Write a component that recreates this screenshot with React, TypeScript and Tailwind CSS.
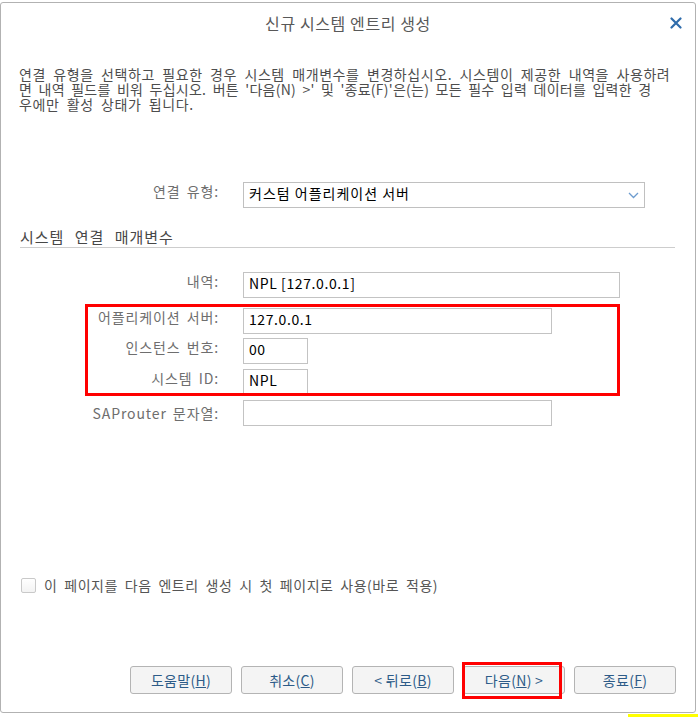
function Field({
  label,
  value,
  width,
  rowClass,
  labelClass = "",
}: {
  label: string;
  value?: string;
  width: string;
  rowClass: string;
  labelClass?: string;
}) {
  return (
    <div className={`flex items-start ${rowClass}`}>
      <div className={`w-[218px] shrink-0 whitespace-nowrap text-right text-[14px] leading-[18px] tracking-[0.9px] text-[#6e6e6e] [word-spacing:2px] ${labelClass}`}>
        {label}
      </div>
      <div className={`ml-[24px] h-[26px] border border-[#c3c3c3] bg-white pl-[5px] pt-[1px] text-[14px] leading-[18px] tracking-[0.6px] text-black ${width}`}>
        {value}
      </div>
    </div>
  );
}

function Btn({ pre, key1, post }: { pre: string; key1: string; post?: string }) {
  return (
    <button className="flex h-[28px] w-[102px] items-center justify-center rounded-[3px] border border-[#b4b4b4] bg-[#f4f4f4] text-[14px] tracking-[0.3px] text-[#2d5b88]">
      {pre}(<span className="underline">{key1}</span>){post}
    </button>
  );
}

export default function App() {
  return (
    <div className="relative h-[717px] w-[698px] overflow-hidden bg-white font-['Noto_Sans_CJK_KR',sans-serif]">
      <div className="mt-[2px] flex h-[711px] w-[696px] flex-col rounded-[3px] border border-[#b2b2b2] bg-white">
        {/* Header */}
        <div className="grid h-[40px] shrink-0 grid-cols-[1fr_auto_1fr] items-center">
          <div />
          <div className="text-[16px] tracking-[0.6px] text-[#585858]">신규 시스템 엔트리 생성</div>
          <div className="flex justify-end pr-[13px]">
            <svg width="12" height="12" viewBox="0 0 12 12">
              <path d="M1.5 1.5 L10.5 10.5 M10.5 1.5 L1.5 10.5" stroke="#2f6cab" strokeWidth="2.2" strokeLinecap="round" />
            </svg>
          </div>
        </div>

        {/* Description */}
        <div className="mt-[24px] whitespace-nowrap pl-[18px] text-[14px] leading-[15px] tracking-[0.6px] text-[#4d4d4d] [word-spacing:3.6px]">
          <div>연결 유형을 선택하고 필요한 경우 시스템 매개변수를 변경하십시오. 시스템이 제공한 내역을 사용하려</div>
          <div className="tracking-[0.25px] [word-spacing:3px]">
            면 내역 필드를 비워 두십시오. 버튼 '다음(N) &gt;' 및 '종료(F)'은(는) 모든 필수 입력 데이터를 입력한 경
          </div>
          <div>우에만 활성 상태가 됩니다.</div>
        </div>

        {/* Connection type */}
        <div className="mt-[70px] flex items-start">
          <div className="w-[218px] shrink-0 text-right text-[14px] leading-[18px] tracking-[0.9px] text-[#6e6e6e] [word-spacing:2px]">
            연결 유형:
          </div>
          <div className="ml-[24px] flex h-[26px] w-[402px] items-start justify-between border border-[#c0c0c0] bg-white pl-[5px] pt-[1px] text-[14px] leading-[18px] text-black">
            <span className="tracking-[1px]">커스텀 어플리케이션 서버</span>
            <svg className="mr-[5px] mt-[8px]" width="11" height="7" viewBox="0 0 11 7">
              <path d="M1 1 L5.5 5.5 L10 1" fill="none" stroke="#6d9ccf" strokeWidth="1.3" />
            </svg>
          </div>
        </div>

        {/* Section header */}
        <div className="ml-[19px] mr-[20px] mt-[19px] h-[21px] border-b border-[#cdcdcd] text-[15px] leading-[20px] tracking-[1px] text-[#474747] [word-spacing:6px]">
          시스템 연결 매개변수
        </div>

        <Field rowClass="mt-[24px]" label="내역:" value="NPL [127.0.0.1]" width="w-[377px]" />
        <Field rowClass="mt-[10px]" label="어플리케이션 서버:" value="127.0.0.1" width="w-[309px]" />
        <Field rowClass="mt-[4px]" label="인스턴스 번호:" value="00" width="w-[65px]" />
        <Field rowClass="mt-[5px]" label="시스템 ID:" value="NPL" width="w-[65px]" />
        <Field rowClass="mt-[5px]" label="SAProuter 문자열:" width="w-[309px]" labelClass="mt-[4px]" />

        {/* Checkbox */}
        <div className="mt-[150px] flex h-[18px] items-center">
          <div className="ml-[20px] h-[15px] w-[15px] rounded-[2px] border border-[#c9c9c9] bg-gradient-to-b from-white to-[#f3f3f3]" />
          <span className="ml-[8px] whitespace-nowrap text-[14px] leading-[18px] tracking-[0.5px] text-[#555] [word-spacing:3.3px]">
            이 페이지를 다음 엔트리 생성 시 첫 페이지로 사용(바로 적용)
          </span>
        </div>

        {/* Buttons */}
        <div className="mt-[72px] flex justify-end gap-[9px] pr-[19px]">
          <Btn pre="도움말" key1="H" />
          <Btn pre="취소" key1="C" />
          <Btn pre="< 뒤로" key1="B" />
          <Btn pre="다음" key1="N" post=" >" />
          <Btn pre="종료" key1="F" />
        </div>
      </div>

      {/* Annotation boxes */}
      <div className="absolute left-[85px] top-[304px] h-[92px] w-[535px] border-[3px] border-[#ff0000]" />
      <div className="absolute left-[462px] top-[662px] h-[37px] w-[100px] border-[3px] border-[#ff0000]" />
      <div className="absolute left-[628px] top-[714px] h-[3px] w-[70px] bg-[#ffff00]" />
    </div>
  );
}
